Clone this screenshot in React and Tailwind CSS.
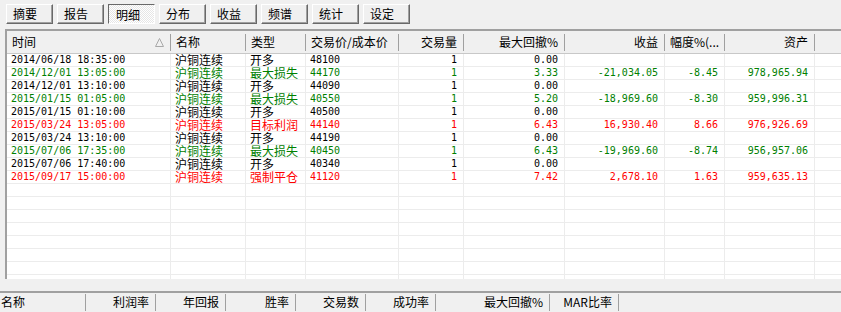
const tabs = ['摘要', '报告', '明细', '分布', '收益', '频谱', '统计', '设定']

const cols = [
  { label: '时间', w: 164, align: 'left', sort: true },
  { label: '名称', w: 75, align: 'left' },
  { label: '类型', w: 60, align: 'left' },
  { label: '交易价/成本价', w: 93, align: 'left' },
  { label: '交易量', w: 65, align: 'right' },
  { label: '最大回撤%', w: 101, align: 'right' },
  { label: '收益', w: 100, align: 'right' },
  { label: '幅度%(...', w: 60, align: 'left', data: 'right' },
  { label: '资产', w: 90, align: 'right' },
]

const BLACK = 'text-black'
const GREEN = 'text-[#008000]'
const RED = 'text-[#ff0000]'

const rows = [
  { c: BLACK, v: ['2014/06/18 18:35:00', '沪铜连续', '开多', '48100', '1', '0.00', '', '', ''] },
  { c: GREEN, v: ['2014/12/01 13:05:00', '沪铜连续', '最大损失', '44170', '1', '3.33', '-21,034.05', '-8.45', '978,965.94'] },
  { c: BLACK, v: ['2014/12/01 13:10:00', '沪铜连续', '开多', '44090', '1', '0.00', '', '', ''] },
  { c: GREEN, v: ['2015/01/15 01:05:00', '沪铜连续', '最大损失', '40550', '1', '5.20', '-18,969.60', '-8.30', '959,996.31'] },
  { c: BLACK, v: ['2015/01/15 01:10:00', '沪铜连续', '开多', '40500', '1', '0.00', '', '', ''] },
  { c: RED, v: ['2015/03/24 13:05:00', '沪铜连续', '目标利润', '44140', '1', '6.43', '16,930.40', '8.66', '976,926.69'] },
  { c: BLACK, v: ['2015/03/24 13:10:00', '沪铜连续', '开多', '44190', '1', '0.00', '', '', ''] },
  { c: GREEN, v: ['2015/07/06 17:35:00', '沪铜连续', '最大损失', '40450', '1', '6.43', '-19,969.60', '-8.74', '956,957.06'] },
  { c: BLACK, v: ['2015/07/06 17:40:00', '沪铜连续', '开多', '40340', '1', '0.00', '', '', ''] },
  { c: RED, v: ['2015/09/17 15:00:00', '沪铜连续', '强制平仓', '41120', '1', '7.42', '2,678.10', '1.63', '959,635.13'] },
]

const summaryCols = [
  { label: '名称', w: 86, align: 'left' },
  { label: '利润率', w: 70 },
  { label: '年回报', w: 70 },
  { label: '胜率', w: 70 },
  { label: '交易数', w: 70 },
  { label: '成功率', w: 70 },
  { label: '最大回撤%', w: 114 },
  { label: 'MAR比率', w: 69 },
]

const cjk = "font-['Noto_Sans_CJK_SC',sans-serif]"
const mono = "font-['DejaVu_Sans_Mono',monospace]"

function Tab({ label, pressed }) {
  if (pressed) {
    return (
      <div className={`flex h-[20px] w-[47px] items-center border border-t-[#696969] border-l-[#696969] border-b-white border-r-white bg-[repeating-conic-gradient(#ffffff_0_25%,#e6e6e6_0_50%)] bg-[length:2px_2px] pl-[7px] pt-px text-[12px] leading-none text-black ${cjk}`}>
        {label}
      </div>
    )
  }
  return (
    <div className={`flex h-[20px] w-[47px] items-center border border-t-white border-l-white border-b-[#696969] border-r-[#696969] bg-[#f0f0f0] pl-[6px] text-[12px] leading-none text-black shadow-[inset_-1px_-1px_0_#a0a0a0] ${cjk}`}>
      {label}
    </div>
  )
}

function isCjk(text) {
  return /[\u4e00-\u9fff]/.test(text)
}

function DataRow({ row }) {
  return (
    <div className={`flex h-[13px] border-b border-[#ececec] ${row ? row.c : ''}`}>
      {cols.map((col, i) => {
        const text = row ? row.v[i] : ''
        const align = col.data || col.align
        return (
          <div key={i} className="flex shrink-0 border-r border-[#ececec]" style={{ width: col.w }}>
            <div className={`flex-1 whitespace-nowrap ${align === 'right' ? 'pr-[6px] text-right' : 'pl-[4px] text-left'} ${isCjk(text) ? `${cjk} text-[12px] leading-[12px]` : `${mono} text-[10px] leading-[12px]`}`}>
              {text}
            </div>
          </div>
        )
      })}
      <div className="flex-1" />
    </div>
  )
}

export default function App() {
  const blanks = Array.from({ length: 8 })

  return (
    <div className={`flex h-[312px] w-[841px] flex-col overflow-hidden bg-[#f0f0f0] ${cjk}`}>
      <div className="flex gap-[4px] pl-[6px] pt-[4px]">
        {tabs.map((t) => (
          <Tab key={t} label={t} pressed={t === '明细'} />
        ))}
      </div>

      <div className="ml-[5px] mt-[5px] flex h-[250px] flex-col border-l-2 border-t-2 border-[#a0a0a0]">
        <div className="flex h-[23px] shrink-0 border-b border-[#c8c8c8] bg-[#f0f0f0]">
          {cols.map((col, i) => (
            <div key={i} className="flex shrink-0 items-center" style={{ width: col.w }}>
              <div className={`flex flex-1 items-center whitespace-nowrap text-[12px] text-black ${col.align === 'right' ? 'justify-end pr-[6px]' : 'pl-[5px]'}`}>
                <span>{col.label}</span>
                {col.sort && (
                  <svg className="ml-auto mr-[6px]" width="9" height="9" viewBox="0 0 9 9">
                    <path d="M4.5 0.5 L8.5 8.5 L0.5 8.5 Z" fill="none" stroke="#a8a8a8" strokeWidth="1" />
                  </svg>
                )}
              </div>
              <div className="h-[17px] w-px bg-[#a0a0a0]" />
            </div>
          ))}
          <div className="flex-1" />
        </div>

        <div className="flex-1 overflow-hidden bg-white">
          {rows.map((r, i) => (
            <DataRow key={i} row={r} />
          ))}
          {blanks.map((_, i) => (
            <DataRow key={`b${i}`} row={null} />
          ))}
        </div>
      </div>

      <div className="mt-[12px] flex h-[20px] shrink-0 border-t-2 border-[#a0a0a0]">
        {summaryCols.map((col, i) => (
          <div key={i} className="flex shrink-0 items-center" style={{ width: col.w }}>
            <div className={`flex-1 whitespace-nowrap text-[12px] text-black ${col.align === 'left' ? 'pl-[1px] text-left' : 'pr-[6px] text-right'}`}>
              {col.label}
            </div>
            <div className="h-[17px] w-px self-end bg-[#a0a0a0]" />
          </div>
        ))}
      </div>
    </div>
  )
}
